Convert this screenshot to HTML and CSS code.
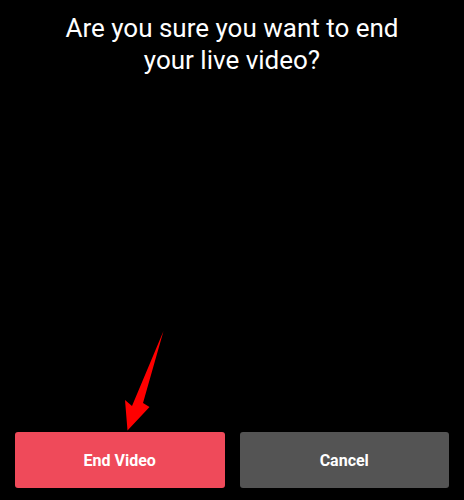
FILE: index.html
```html
<!DOCTYPE html>
<html lang="en">
<head>
    <meta charset="UTF-8">
    <meta name="viewport" content="width=device-width, initial-scale=1.0">
    <title>End live video</title>
    <link rel="stylesheet" href="styles.css">
</head>
<body>
    <div class="screen">
        <h1 class="question">Are you sure you want to end<br>your live video?</h1>

        <div class="actions">
            <button class="btn btn-end">End Video</button>
            <button class="btn btn-cancel">Cancel</button>
        </div>

        <!-- annotation arrow pointing at the End Video button -->
        <svg class="pointer" width="464" height="500" viewBox="0 0 464 500">
            <polygon points="163.5,331 143,403 149.5,407 127.5,430.5 125,400 132,406" fill="#ff0000"/>
        </svg>
    </div>
</body>
</html>
```

FILE: styles.css
```css
* {
    margin: 0;
    padding: 0;
    box-sizing: border-box;
}

html, body {
    height: 100%;
    background-color: #000;
}

body {
    font-family: Roboto, "Liberation Sans", sans-serif;
    color: #fff;
}

.screen {
    position: relative;
    height: 100%;
    display: flex;
    flex-direction: column;
    justify-content: space-between;
    padding: 12px 15px 12px;
}

.question {
    font-size: 26px;
    font-weight: 400;
    line-height: 32px;
    text-align: center;
}

.actions {
    display: flex;
    gap: 15px;
}

.btn {
    flex: 1;
    height: 56px;
    border: none;
    border-radius: 3px;
    font-family: inherit;
    font-size: 16px;
    font-weight: 700;
    color: #fff;
}

.btn-end {
    background-color: #ef4a5a;
}

.btn-cancel {
    background-color: #545454;
}

.pointer {
    position: absolute;
    top: 0;
    left: 0;
    pointer-events: none;
}
```
